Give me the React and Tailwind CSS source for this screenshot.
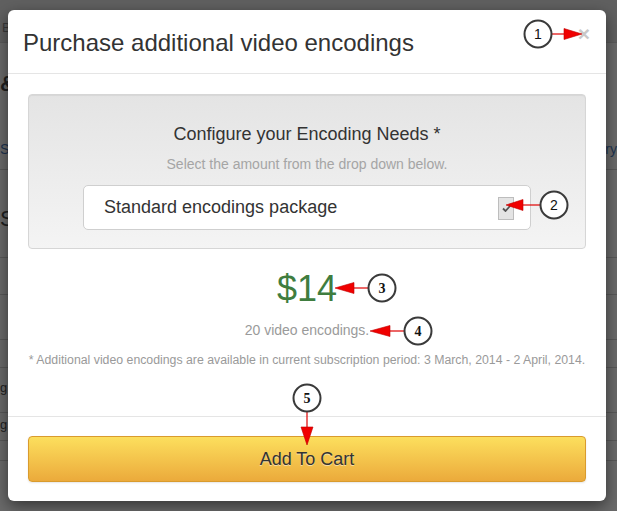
import React from 'react'

const font = { fontFamily: '"Liberation Sans", Arial, sans-serif' }

// numbered callouts drawn over the screenshot
const callouts = [
  { n: '1', cx: 538, cy: 34, line: [551, 34, 564, 34], head: '564,28.5 564,39.5 582,34' },
  { n: '2', cx: 554, cy: 205, line: [540, 205, 523, 205], head: '523,199.5 523,210.5 506,205' },
  { n: '3', cx: 382, cy: 288, line: [368, 288, 354, 288], head: '354,282.5 354,293.5 335,288' },
  { n: '4', cx: 418, cy: 331, line: [404, 331, 390, 331], head: '390,325.5 390,336.5 370,331' },
  { n: '5', cx: 307, cy: 398, line: [307, 412, 307, 427], head: '301,427 313,427 307,445' },
]

function Callouts() {
  return (
    <svg className="absolute inset-0 pointer-events-none" width="617" height="511" viewBox="0 0 617 511">
      {callouts.map((c) => (
        <g key={c.n}>
          <line x1={c.line[0]} y1={c.line[1]} x2={c.line[2]} y2={c.line[3]} stroke="#e00000" strokeWidth="1.2" />
          <polygon points={c.head} fill="#f00000" stroke="#c00000" strokeWidth="0.6" />
          <circle cx={c.cx} cy={c.cy} r="13.5" fill="#fff" stroke="#3a3a3a" strokeWidth="2" />
          <text
            x={c.cx}
            y={c.cy + 5}
            textAnchor="middle"
            fontSize="14"
            fontFamily={Number(c.n) > 2 ? '"Liberation Serif", serif' : '"Liberation Sans", sans-serif'}
            fontWeight={Number(c.n) > 2 ? 'bold' : 'normal'}
            fill="#111"
          >
            {c.n}
          </text>
        </g>
      ))}
    </svg>
  )
}

function BackgroundPage() {
  return (
    <div className="flex flex-col text-[#1f1f1f]">
      <div className="h-[43px] bg-[#606060] border-b border-[#5a5a5a] pl-[2px] pt-[18px] text-[13px] text-[#3a3a3a]">Bi</div>
      <div className="h-[70px] pt-[30px] text-[22px] font-bold leading-none">&amp;</div>
      <div className="h-[57px] flex justify-between items-start pt-[26px] text-[14px] text-[#1d3350] border-b border-[#585858]">
        <span>Su</span>
        <span>ry</span>
      </div>
      <div className="h-[88px] pt-[38px] text-[22px] leading-none border-b border-[#585858]">S</div>
      <div className="h-[37px] border-b border-[#585858]" />
      <div className="h-[45px] border-b border-[#585858]" />
      <div className="h-[28px] border-b border-[#585858]" />
      <div className="h-[45px] border-b border-[#585858] pt-[10px] text-[13px]">g</div>
      <div className="h-[28px] border-b border-[#585858] pt-[2px] text-[13px]">g</div>
      <div className="h-[20px] border-b border-[#585858]" />
    </div>
  )
}

export default function App() {
  return (
    <div className="relative w-[617px] h-[511px] overflow-hidden bg-[#6a6a6a]" style={font}>
      <BackgroundPage />

      {/* modal */}
      <div className="absolute left-[8px] top-[10px] w-[598px] h-[491px] bg-white rounded-[6px] shadow-[0_5px_15px_rgba(0,0,0,0.5)] flex flex-col">
        <div className="h-[64px] flex items-center justify-between pl-[15px] pr-[16px] border-b border-[#e5e5e5]">
          <h3 className="text-[24px] text-[#333] leading-none mt-[2px]">Purchase additional video encodings</h3>
          <span className="text-[21px] font-bold text-[#c8c8c8] leading-none -mt-[16px]">×</span>
        </div>

        <div className="px-[20px] pt-[20px] flex flex-col items-center">
          <div className="w-full h-[155px] rounded-[4px] border border-[#d6d6d6] bg-gradient-to-b from-[#e4e4e4] to-[#f4f4f4] shadow-[inset_0_1px_1px_rgba(0,0,0,0.06)] flex flex-col items-center pt-[28px]">
            <div className="text-[18px] text-[#333] leading-[22px]">Configure your Encoding Needs *</div>
            <div className="text-[14px] text-[#a5a5a5] leading-[18px] mt-[10px]">Select the amount from the drop down below.</div>
            <div className="mt-[12px] w-[448px] h-[45px] bg-white border border-[#cfcfcf] rounded-[5px] flex items-center justify-between pl-[20px] pr-[16px]">
              <span className="text-[18px] text-[#333]">Standard encodings package</span>
              <span className="w-[16px] h-[23px] bg-[#e4e4e4] border border-[#bdbdbd] flex items-center justify-center mt-[2px]">
                <svg width="9" height="7" viewBox="0 0 9 7">
                  <path d="M1 3.5 L3.5 6 L8 1" fill="none" stroke="#555" strokeWidth="1.8" />
                </svg>
              </span>
            </div>
          </div>

          <div className="mt-[20px] text-[36px] leading-[40px] text-[#3f7d3f]">$14</div>
          <div className="mt-[12px] text-[14px] leading-[18px] text-[#9a9a9a]">20 video encodings.</div>
          <div className="mt-[13px] text-[12.3px] leading-[16px] text-[#9a9a9a] whitespace-nowrap">
            * Additional video encodings are available in current subscription period: 3 March, 2014 - 2 April, 2014.
          </div>
        </div>

        <div className="mt-auto border-t border-[#e5e5e5] px-[20px] pt-[19px] pb-[19px]">
          <button className="w-full h-[46px] rounded-[4px] border border-[#d99b2e] bg-gradient-to-b from-[#fcdf5d] to-[#ebaa3b] text-[18px] text-[#333] [text-shadow:0_1px_0_rgba(255,255,255,0.5)] shadow-[0_1px_2px_rgba(0,0,0,0.1)]">
            Add To Cart
          </button>
        </div>
      </div>

      <Callouts />
    </div>
  )
}
